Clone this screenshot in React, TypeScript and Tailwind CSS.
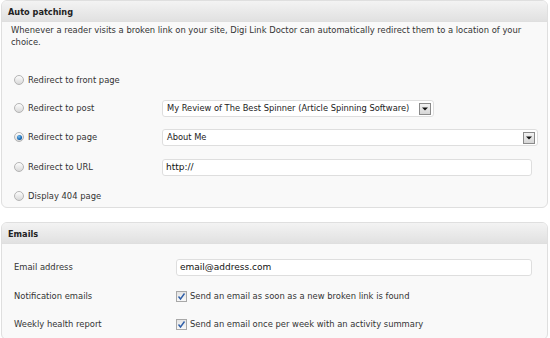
import type { ReactNode } from 'react'

const font = { fontFamily: '"DejaVu Sans", Verdana, sans-serif' }

function Radio({ checked = false }: { checked?: boolean }) {
  return (
    <span className="flex h-[10px] w-[10px] items-center justify-center rounded-full border border-[#b4b4b4] bg-gradient-to-b from-[#fdfdfd] to-[#d9d9d9]">
      {checked && (
        <span className="h-[5px] w-[5px] rounded-full bg-[radial-gradient(circle_at_40%_35%,#7ec0f0,#1566b0_60%,#0c3f78)]" />
      )}
    </span>
  )
}

function Checkbox() {
  return (
    <span className="flex h-[11px] w-[11px] items-center justify-center border border-[#a8a8a8] bg-gradient-to-b from-[#e4e4e4] to-[#f8f8f8]">
      <svg width="9" height="9" viewBox="0 0 9 9">
        <path d="M1.5 4.5 L3.5 7 L7.5 1.5" fill="none" stroke="#2f5fa8" strokeWidth="1.4" />
      </svg>
    </span>
  )
}

function Select({ value, width }: { value: string; width: string }) {
  return (
    <div className={`flex h-[17px] items-center justify-between rounded-[3px] border border-[#dedede] bg-white pl-[4px] pr-[2px] ${width}`}>
      <span className="whitespace-nowrap text-[8.3px] leading-none text-[#222]">{value}</span>
      <span className="flex h-[12px] w-[12px] items-center justify-center border border-[#8a8a8a] bg-gradient-to-b from-[#f2f2f2] to-[#d6d6d6]">
        <svg width="6" height="4" viewBox="0 0 6 4">
          <path d="M0 0.5 H6 L3 3.5 Z" fill="#111" />
        </svg>
      </span>
    </div>
  )
}

function Input({ value, width }: { value: string; width: string }) {
  return (
    <div className={`flex h-[17px] items-center rounded-[3px] border border-[#dedede] bg-white pl-[3px] ${width}`}>
      <span className="text-[9px] leading-none text-[#111]">{value}</span>
    </div>
  )
}

function Panel({ title, children }: { title: string; children: ReactNode }) {
  return (
    <div className="mx-[1px] w-[547px] overflow-hidden rounded-[6px] border border-[#dfdfdf] bg-[#f9f9f9]">
      <div className="flex h-[21px] items-center border-b border-[#dfdfdf] bg-gradient-to-b from-[#f3f3f3] to-[#e1e1e1] px-[6px] pt-[2px]">
        <span className="text-[8.2px] font-bold text-[#222]">{title}</span>
      </div>
      {children}
    </div>
  )
}

function RadioRow({ label, checked, control, mt }: { label: string; checked?: boolean; control?: ReactNode; mt: string }) {
  return (
    <div className={`flex h-[17px] items-center ${mt}`}>
      <div className="flex w-[160px] items-center pl-[12px]">
        <Radio checked={checked} />
        <span className="ml-[4px] text-[8.4px] text-[#333]">{label}</span>
      </div>
      {control}
    </div>
  )
}

export default function App() {
  return (
    <div className="h-[338px] w-[550px] overflow-hidden bg-white" style={font}>
      <Panel title="Auto patching">
        <p className="mt-[2px] px-[9px] text-[8.4px] leading-[12px] text-[#333]">
          Whenever a reader visits a broken link on your site, Digi Link Doctor can automatically redirect them to a location of your choice.
        </p>
        <div className="pb-[2px]">
          <RadioRow label="Redirect to front page" mt="mt-[24px]" />
          <RadioRow
            label="Redirect to post"
            mt="mt-[11px]"
            control={<Select value="My Review of The Best Spinner (Article Spinning Software)" width="w-[272px]" />}
          />
          <RadioRow
            label="Redirect to page"
            checked
            mt="mt-[12px]"
            control={<Select value="About Me" width="w-[376px]" />}
          />
          <RadioRow
            label="Redirect to URL"
            mt="mt-[13px]"
            control={<Input value="http://" width="w-[370px]" />}
          />
          <RadioRow label="Display 404 page" mt="mt-[12px]" />
        </div>
      </Panel>
      <div className="h-[14px]" />
      <Panel title="Emails">
        <div className="pb-[6px]">
          <div className="mt-[15px] flex h-[17px] items-center">
            <span className="w-[174px] pl-[12px] text-[8.4px] text-[#333]">Email address</span>
            <Input value="email@address.com" width="w-[356px]" />
          </div>
          <div className="mt-[12px] flex h-[17px] items-center">
            <span className="w-[174px] pl-[12px] text-[8.4px] text-[#333]">Notification emails</span>
            <Checkbox />
            <span className="ml-[3px] text-[8.4px] text-[#333]">Send an email as soon as a new broken link is found</span>
          </div>
          <div className="mt-[11px] flex h-[17px] items-center">
            <span className="w-[174px] pl-[12px] text-[8.4px] text-[#333]">Weekly health report</span>
            <Checkbox />
            <span className="ml-[3px] text-[8.4px] text-[#333]">Send an email once per week with an activity summary</span>
          </div>
        </div>
      </Panel>
    </div>
  )
}
